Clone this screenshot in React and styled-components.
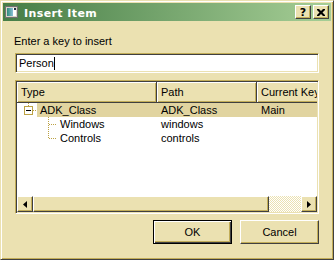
import React from 'react';
import styled, { createGlobalStyle, css } from 'styled-components';

const face = '#ebe1b1';
const light = '#ffffff';
const shadow = '#c2ad58';
const dark = '#404040';
const select = '#e1d4a0';
const dots = '#bca244';

const GlobalStyle = createGlobalStyle`
  html, body {
    margin: 0;
    padding: 0;
    background: ${face};
  }

  body {
    font-family: "Liberation Sans", Arial, sans-serif;
    font-size: 11px;
    color: #000;
  }

  * {
    box-sizing: border-box;
  }
`;

const raised = css`
  background: ${face};
  border: 1px solid;
  border-color: ${light} ${dark} ${dark} ${light};
  box-shadow: inset -1px -1px 0 ${shadow};
`;

const sunken = css`
  border: 1px solid;
  border-color: ${shadow} ${light} ${light} ${shadow};
  box-shadow: inset 1px 1px 0 ${dark}, inset -1px -1px 0 ${face};
  padding: 1px;
`;

const Window = styled.div`
  width: 334px;
  height: 260px;
  display: flex;
  flex-direction: column;
  padding: 2px;
  background: ${face};
  border: 1px solid;
  border-color: ${face} ${dark} ${dark} ${face};
  box-shadow: inset 1px 1px 0 ${light}, inset -1px -1px 0 ${shadow};
`;

const TitleBar = styled.div`
  height: 18px;
  flex: none;
  display: flex;
  align-items: center;
  padding: 0 2px;
  background: linear-gradient(to right, #467d46, #a6ce96);
`;

const TitleText = styled.span`
  flex: 1;
  margin: 2px 0 0 6px;
  font-family: "DejaVu Sans", sans-serif;
  font-weight: bold;
  font-size: 11px;
  line-height: 13px;
  letter-spacing: 0.4px;
  color: #fff;
`;

const TitleButton = styled.div`
  ${raised};
  width: 16px;
  height: 14px;
  display: flex;
  align-items: center;
  justify-content: center;
  font: bold 11px "DejaVu Sans", sans-serif;

  & + & {
    margin-left: 2px;
  }
`;

const Body = styled.div`
  flex: 1;
  display: flex;
  flex-direction: column;
  padding: 14px 12px 0;
`;

const Label = styled.div`
  line-height: 13px;
  margin-left: -1px;
`;

const Field = styled.div`
  ${sunken};
  margin-top: 5px;
  height: 20px;
  display: flex;
  align-items: center;
  padding-left: 3px;
  background: #fff;
  line-height: 13px;
`;

const Caret = styled.span`
  width: 1px;
  height: 13px;
  background: #000;
`;

const Tree = styled.div`
  ${sunken};
  margin-top: 7px;
  height: 134px;
  display: flex;
  flex-direction: column;
  background: #fff;
`;

const Header = styled.div`
  display: grid;
  grid-template-columns: 140px 100px 100px;
  overflow: hidden;
  flex: none;
`;

const HeaderCell = styled.div`
  height: 21px;
  display: flex;
  align-items: center;
  padding-left: 4px;
  background: ${face};
  border-right: 1px solid ${dark};
  border-bottom: 1px solid ${dark};
  box-shadow: inset 1px 1px 0 ${light}, inset -1px -1px 0 ${shadow};
  white-space: nowrap;
`;

const Rows = styled.div`
  flex: 1;
  overflow: hidden;
`;

const Row = styled.div`
  display: grid;
  grid-template-columns: 140px 100px 1fr;
  height: 14px;
  line-height: 13px;
`;

const TypeCell = styled.div`
  display: flex;
`;

const Branch = styled.svg`
  display: block;
  flex: none;
`;

const Cell = styled.div`
  flex: 1;
  padding: 1px 0 0 ${(p) => p.$pad}px;
  background: ${(p) => (p.$selected ? select : 'transparent')};
  white-space: nowrap;
  overflow: hidden;
`;

const HScroll = styled.div`
  flex: none;
  height: 16px;
  display: flex;
`;

const ScrollButton = styled.div`
  ${raised};
  width: 16px;
  flex: none;
  display: flex;
  align-items: center;
  justify-content: center;
`;

const Thumb = styled.div`
  ${raised};
  width: 236px;
  flex: none;
`;

const Track = styled.div`
  flex: 1;
  background-color: ${light};
  background-image: conic-gradient(${face} 25%, transparent 0 50%, ${face} 0 75%, transparent 0);
  background-size: 2px 2px;
`;

const ButtonRow = styled.div`
  display: flex;
  justify-content: flex-end;
  gap: 8px;
  margin-top: 6px;
`;

const Button = styled.div`
  width: 79px;
  height: 24px;
  display: flex;
  align-items: center;
  justify-content: center;
  background: ${face};
  border: 1px solid;
  border-color: ${(p) => (p.$default ? '#000' : `${light} ${dark} ${dark} ${light}`)};
  box-shadow: ${(p) =>
    p.$default
      ? `inset 1px 1px 0 ${light}, inset -1px -1px 0 ${dark}, inset -2px -2px 0 ${shadow}`
      : `inset -1px -1px 0 ${shadow}`};
`;

const items = [
  { type: 'ADK_Class', path: 'ADK_Class', key: 'Main', depth: 0, open: true, selected: true },
  { type: 'Windows', path: 'windows', key: '', depth: 1 },
  { type: 'Controls', path: 'controls', key: '', depth: 1, last: true },
];

function Dotted(props) {
  return <line stroke={dots} strokeDasharray="1 1" shapeRendering="crispEdges" {...props} />;
}

function BranchLines({ item }) {
  if (item.depth === 0) {
    return (
      <Branch width="20" height="14">
        <Dotted x1="11.5" y1="0" x2="11.5" y2="3" />
        <rect x="7.5" y="3.5" width="8" height="8" fill="#fff" stroke={dots} shapeRendering="crispEdges" />
        <line x1="9" y1="7.5" x2="14" y2="7.5" stroke="#000" shapeRendering="crispEdges" />
        <Dotted x1="16" y1="7.5" x2="20" y2="7.5" />
      </Branch>
    );
  }
  return (
    <>
      <Branch width="20" height="14" />
      <Branch width="20" height="14">
        <Dotted x1="11.5" y1="0" x2="11.5" y2={item.last ? 8 : 14} />
        <Dotted x1="12" y1="7.5" x2="20" y2="7.5" />
      </Branch>
    </>
  );
}

function WindowIcon() {
  return (
    <svg width="13" height="12" viewBox="0 0 13 12">
      <defs>
        <linearGradient id="ico" x1="0" x2="1">
          <stop offset="0" stopColor="#2e8a7a" />
          <stop offset="1" stopColor="#8cc0d8" />
        </linearGradient>
      </defs>
      <rect x="0.5" y="0.5" width="12" height="11" fill="#d8d4c8" stroke="#707070" />
      <rect x="2" y="2" width="6" height="8" fill="url(#ico)" />
      <rect x="8" y="2" width="3" height="8" fill="#fff" />
      <rect x="9" y="2" width="2" height="2" fill="#203040" />
    </svg>
  );
}

function CloseGlyph() {
  return (
    <svg width="8" height="7" viewBox="0 0 8 7">
      <path d="M0 0h2l2 2 2-2h2v1l-2.5 2.5L8 6v1H6L4 5 2 7H0V6l2.5-2.5L0 1z" fill="#000" />
    </svg>
  );
}

function Arrow({ dir }) {
  const points = dir === 'left' ? '4,0 4,7 0,3.5' : '0,0 0,7 4,3.5';
  return (
    <svg width="4" height="7" viewBox="0 0 4 7">
      <polygon points={points} fill="#000" />
    </svg>
  );
}

export default function App() {
  return (
    <>
      <GlobalStyle />
      <Window>
        <TitleBar>
          <WindowIcon />
          <TitleText>Insert Item</TitleText>
          <TitleButton>?</TitleButton>
          <TitleButton>
            <CloseGlyph />
          </TitleButton>
        </TitleBar>
        <Body>
          <Label>Enter a key to insert</Label>
          <Field>
            Person
            <Caret />
          </Field>
          <Tree>
            <Header>
              <HeaderCell>Type</HeaderCell>
              <HeaderCell>Path</HeaderCell>
              <HeaderCell>Current Key</HeaderCell>
            </Header>
            <Rows>
              {items.map((item) => (
                <Row key={item.type}>
                  <TypeCell>
                    <BranchLines item={item} />
                    <Cell $pad={3} $selected={item.selected}>
                      {item.type}
                    </Cell>
                  </TypeCell>
                  <Cell $pad={4} $selected={item.selected}>
                    {item.path}
                  </Cell>
                  <Cell $pad={4} $selected={item.selected}>
                    {item.key}
                  </Cell>
                </Row>
              ))}
            </Rows>
            <HScroll>
              <ScrollButton>
                <Arrow dir="left" />
              </ScrollButton>
              <Thumb />
              <Track />
              <ScrollButton>
                <Arrow dir="right" />
              </ScrollButton>
            </HScroll>
          </Tree>
          <ButtonRow>
            <Button $default>OK</Button>
            <Button>Cancel</Button>
          </ButtonRow>
        </Body>
      </Window>
    </>
  );
}
